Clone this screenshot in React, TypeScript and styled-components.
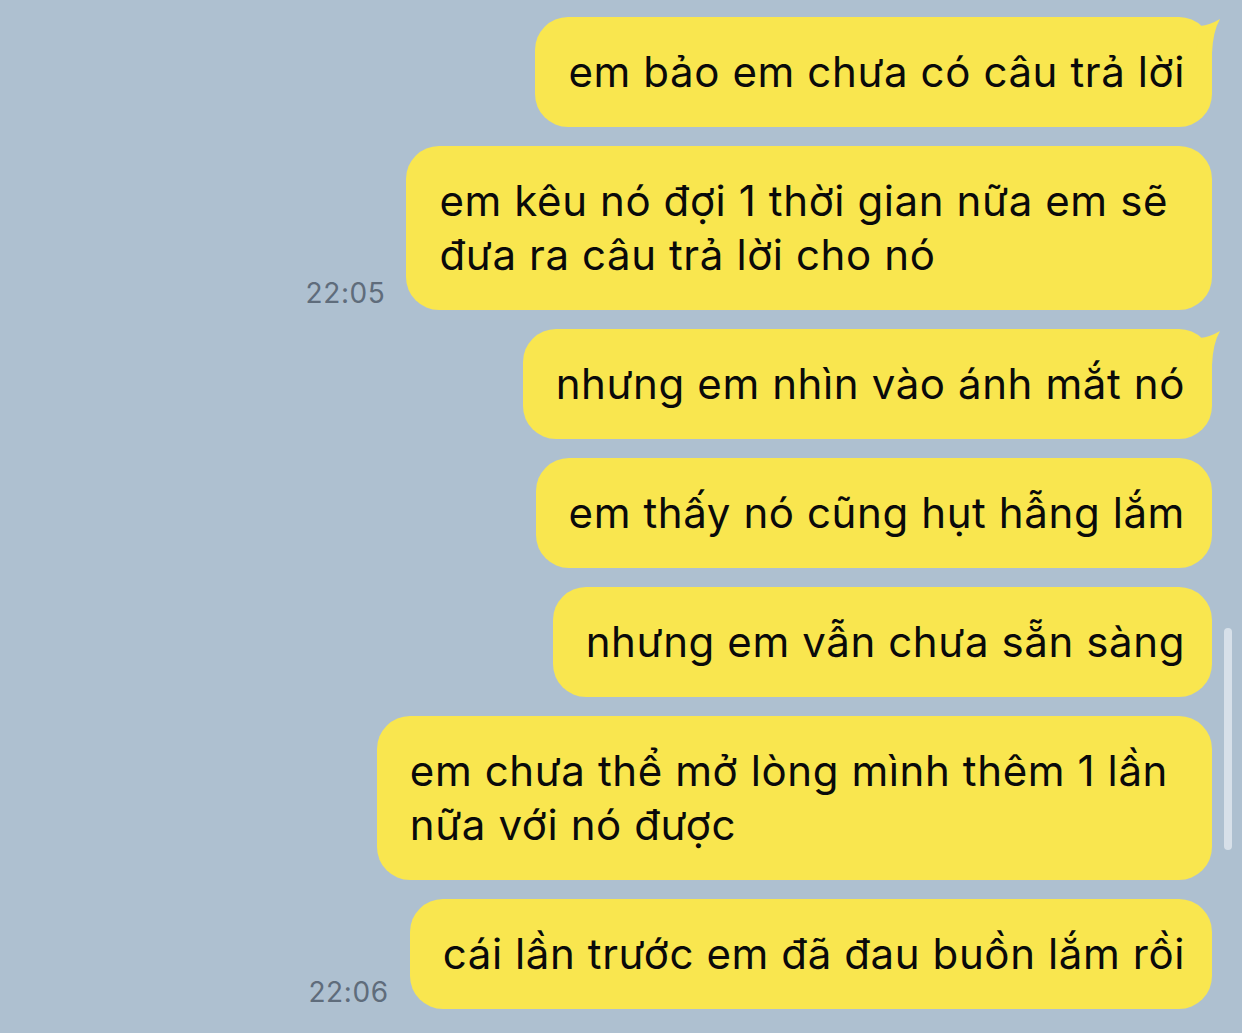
import React from "react";
import styled, { createGlobalStyle } from "styled-components";

const GlobalStyle = createGlobalStyle`
  html, body {
    margin: 0;
    padding: 0;
    background: #aec0d0;
  }
  body {
    font-family: Inter, "Noto Sans", "DejaVu Sans", sans-serif;
  }
`;

const ChatArea = styled.div`
  position: relative;
  width: 1242px;
  height: 1033px;
  overflow: hidden;
  background: #aec0d0;
  display: flex;
  flex-direction: column;
  gap: 19px;
  padding: 17px 30px 0 0;
  box-sizing: border-box;
`;

const Row = styled.div`
  display: flex;
  justify-content: flex-end;
  align-items: flex-end;
  gap: 21px;
`;

const Time = styled.span`
  font-size: 28px;
  color: #5f6c7b;
  line-height: 1;
  padding-bottom: 3px;
  letter-spacing: 0.6px;
`;

const Bubble = styled.div<{ $wrapped?: boolean }>`
  position: relative;
  background: #f9e64f;
  color: #0a0a0a;
  border-radius: 33px;
  padding: 28px ${(p) => (p.$wrapped ? "44px" : "27px")} 28px 33px;
  font-size: 42px;
  line-height: 54px;
  letter-spacing: 0.6px;
  white-space: nowrap;
`;

const Tail = styled.svg`
  position: absolute;
  top: 0;
  right: -10px;
  width: 40px;
  height: 40px;
`;

const ScrollThumb = styled.div`
  position: absolute;
  right: 10px;
  top: 628px;
  width: 8px;
  height: 222px;
  border-radius: 4px;
  background: rgba(232, 238, 243, 0.7);
`;

type Msg = { lines: string[]; time?: string; tail?: boolean };

const messages: Msg[] = [
  { lines: ["em bảo em chưa có câu trả lời"], tail: true },
  { lines: ["em kêu nó đợi 1 thời gian nữa em sẽ", "đưa ra câu trả lời cho nó"], time: "22:05" },
  { lines: ["nhưng em nhìn vào ánh mắt nó"], tail: true },
  { lines: ["em thấy nó cũng hụt hẫng lắm"] },
  { lines: ["nhưng em vẫn chưa sẵn sàng"] },
  { lines: ["em chưa thể mở lòng mình thêm 1 lần", "nữa với nó được"] },
  { lines: ["cái lần trước em đã đau buồn lắm rồi"], time: "22:06" },
];

export default function App() {
  return (
    <>
      <GlobalStyle />
      <ChatArea>
        {messages.map((m, i) => (
          <Row key={i}>
            {m.time && <Time>{m.time}</Time>}
            <Bubble $wrapped={m.lines.length > 1}>
              {m.tail && (
                <Tail viewBox="0 0 40 40">
                  <path d="M18 9 Q28 8 38 2 Q31 14 30 36 L14 36 Z" fill="#f9e64f" />
                </Tail>
              )}
              {m.lines.map((l, j) => (
                <React.Fragment key={j}>
                  {j > 0 && <br />}
                  {l}
                </React.Fragment>
              ))}
            </Bubble>
          </Row>
        ))}
        <ScrollThumb />
      </ChatArea>
    </>
  );
}
